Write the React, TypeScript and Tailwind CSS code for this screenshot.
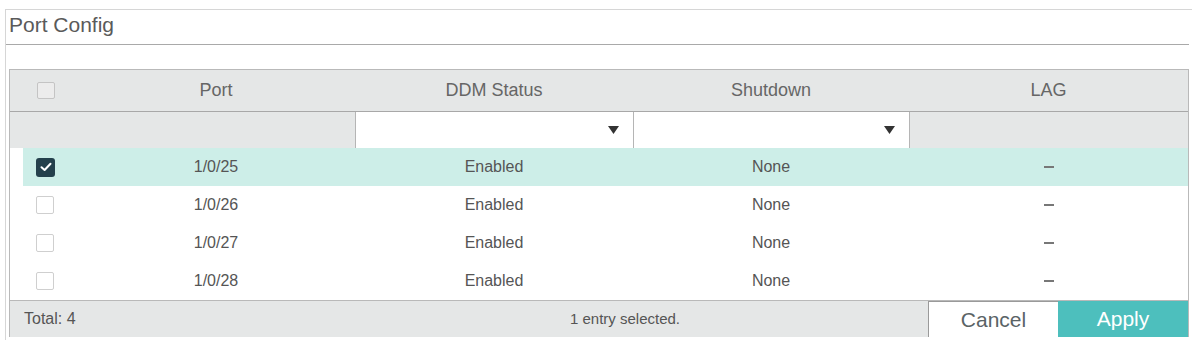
const rows = [
  { port: "1/0/25", ddm: "Enabled", shutdown: "None", checked: true },
  { port: "1/0/26", ddm: "Enabled", shutdown: "None", checked: false },
  { port: "1/0/27", ddm: "Enabled", shutdown: "None", checked: false },
  { port: "1/0/28", ddm: "Enabled", shutdown: "None", checked: false },
];

const cols = "grid grid-cols-[67px_278px_278px_276px_1fr]";

function Checkbox({ checked }: { checked: boolean }) {
  if (checked) {
    return (
      <div className="w-[19px] h-[19px] rounded-[3px] bg-[#24404c] flex items-center justify-center">
        <svg width="12" height="10" viewBox="0 0 12 10" fill="none">
          <path d="M1.5 5.2 L4.6 8 L10.5 1.8" stroke="#fff" strokeWidth="2" strokeLinecap="round" strokeLinejoin="round" />
        </svg>
      </div>
    );
  }
  return <div className="w-[18px] h-[18px] rounded-[2px] border border-[#cfcfcf] bg-white" />;
}

function Dropdown() {
  return (
    <div className="h-full bg-white border-l border-[#b5b5b5] flex items-center justify-end pr-[14px]">
      <svg width="11" height="8" viewBox="0 0 11 8">
        <path d="M0 0 H11 L5.5 8 Z" fill="#333" />
      </svg>
    </div>
  );
}

export default function App() {
  return (
    <div className="w-[1192px] h-[340px] bg-white pt-[9px] pl-[5px] overflow-hidden font-['Liberation_Sans',Arial,sans-serif] text-[#555]">
      <div className="w-[1190px] h-[340px] border-l border-t border-[#d6d6d6] pl-[3px] pr-[6px]">
        {/* Title */}
        <div className="h-[35px] border-b border-[#a9a9a9] -ml-[3px] pl-[3px] pt-[2px] text-[21px] leading-[26px] text-[#5a5a5a]">
          Port Config
        </div>

        {/* Table */}
        <div className="mt-[24px] border border-[#b9b9b9] border-b-0">
          {/* Header */}
          <div className={`${cols} h-[42px] bg-[#e5e7e7] border-b border-[#a8a8a8] text-[18px] text-[#666]`}>
            <div className="flex items-center pl-[27px]">
              <div className="w-[18px] h-[17px] rounded-[2px] border border-[#c4c4c4] bg-[#ececec]" />
            </div>
            <div className="flex items-center justify-center">Port</div>
            <div className="flex items-center justify-center">DDM Status</div>
            <div className="flex items-center justify-center">Shutdown</div>
            <div className="flex items-center justify-center">LAG</div>
          </div>

          {/* Filter row */}
          <div className={`${cols} h-[36px] bg-[#e5e7e7]`}>
            <div className="col-span-2" />
            <Dropdown />
            <Dropdown />
            <div className="border-l border-[#b5b5b5]" />
          </div>

          {/* Rows */}
          <div className="pl-[13px] bg-white">
            {rows.map((r) => (
              <div
                key={r.port}
                className={`grid grid-cols-[54px_278px_278px_276px_1fr] h-[38px] text-[16px] text-[#555] ${r.checked ? "bg-[#cdeee8]" : "bg-white"}`}
              >
                <div className="flex items-center pl-[13px]">
                  <Checkbox checked={r.checked} />
                </div>
                <div className="flex items-center justify-center">{r.port}</div>
                <div className="flex items-center justify-center">{r.ddm}</div>
                <div className="flex items-center justify-center">{r.shutdown}</div>
                <div className="flex items-center justify-center">
                  <span className="block w-[10px] h-[2px] bg-[#777]" />
                </div>
              </div>
            ))}
          </div>

          {/* Footer */}
          <div className="h-[37px] bg-[#e5e7e7] border-t border-[#b9b9b9] flex text-[16px] text-[#555]">
            <div className="w-[540px] flex items-center pl-[14px]">Total: 4</div>
            <div className="w-[150px] flex items-center justify-center text-[15px]">1 entry selected.</div>
            <div className="flex-1" />
            <button className="w-[130px] h-full bg-white border-l border-t border-[#9a9a9a] text-[21px] text-[#5a6366]">
              Cancel
            </button>
            <button className="w-[130px] h-full bg-[#4dbfbd] text-[21px] text-white">Apply</button>
          </div>
        </div>
      </div>
    </div>
  );
}
